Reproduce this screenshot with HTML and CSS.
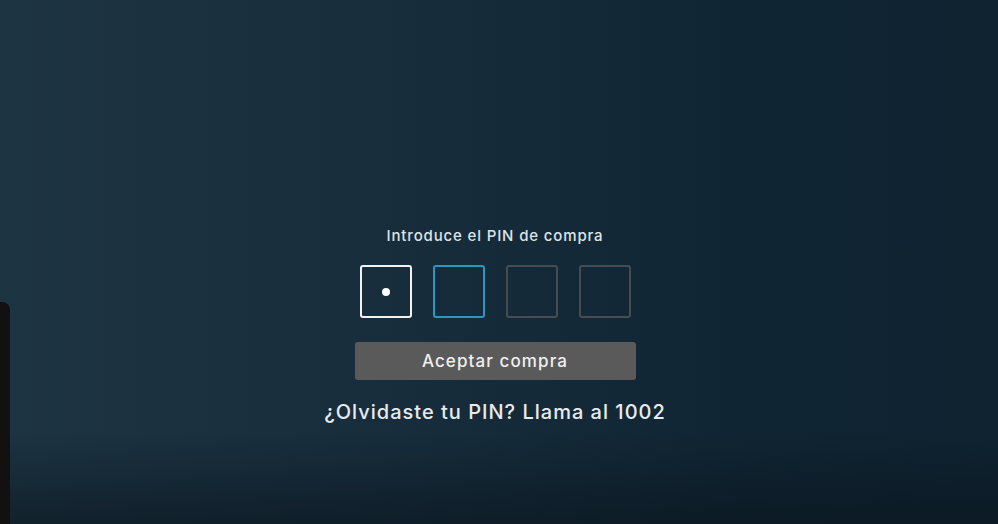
FILE: index.html
```html
<!DOCTYPE html>
<html lang="es">
<head>
    <meta charset="UTF-8">
    <meta name="viewport" content="width=device-width, initial-scale=1.0">
    <title>PIN de compra</title>
    <link rel="stylesheet" href="styles.css">
</head>
<body>
    <div class="side-panel"></div>
    <div class="container">
        <p class="label">Introduce el PIN de compra</p>
        <div class="pin">
            <div class="digit filled"><span class="dot"></span></div>
            <div class="digit active"></div>
            <div class="digit"></div>
            <div class="digit"></div>
        </div>
        <button class="accept">Aceptar compra</button>
        <p class="help">¿Olvidaste tu PIN? Llama al 1002</p>
    </div>
</body>
</html>
```

FILE: styles.css
```css
html, body {
    height: 100%;
}
body {
    margin: 0;
    font-family: Inter, "Open Sans", sans-serif;
    background:
        linear-gradient(to bottom, rgba(8, 18, 26, 0) 0, rgba(8, 18, 26, 0) 430px, rgba(8, 18, 26, 0.55) 100%),
        linear-gradient(to right, #1d3443 0%, #172d3c 40%, #102533 75%, #0f2331 100%);
    overflow: hidden;
    position: relative;
}
.side-panel {
    position: absolute;
    left: 0;
    top: 302px;
    bottom: 0;
    width: 10px;
    background: #121110;
    border-top-right-radius: 8px;
}
.container {
    display: flex;
    flex-direction: column;
    align-items: center;
    padding-top: 226px;
    padding-right: 8px;
}
.label {
    margin: 0;
    font-size: 15px;
    font-weight: 500;
    color: #dfe3e6;
    letter-spacing: 0.85px;
}
.pin {
    display: flex;
    gap: 21px;
    margin-top: 20px;
}
.digit {
    width: 48px;
    height: 49px;
    border: 2px solid #474c52;
    border-radius: 3px;
    display: flex;
    justify-content: center;
    align-items: center;
}
.digit.filled {
    border-color: #f2f2f2;
}
.digit.active {
    border-color: #2a96c6;
}
.dot {
    width: 8px;
    height: 8px;
    border-radius: 50%;
    background: #ffffff;
}
.accept {
    margin-top: 24px;
    width: 281px;
    height: 38px;
    border: none;
    border-radius: 3px;
    background: #5a5a5a;
    color: #f0f0f0;
    font-family: inherit;
    font-size: 17px;
    font-weight: 500;
    letter-spacing: 1.1px;
}
.help {
    margin: 20px 0 0;
    font-size: 20px;
    font-weight: 500;
    color: #e8ebed;
    letter-spacing: 1px;
}
```
